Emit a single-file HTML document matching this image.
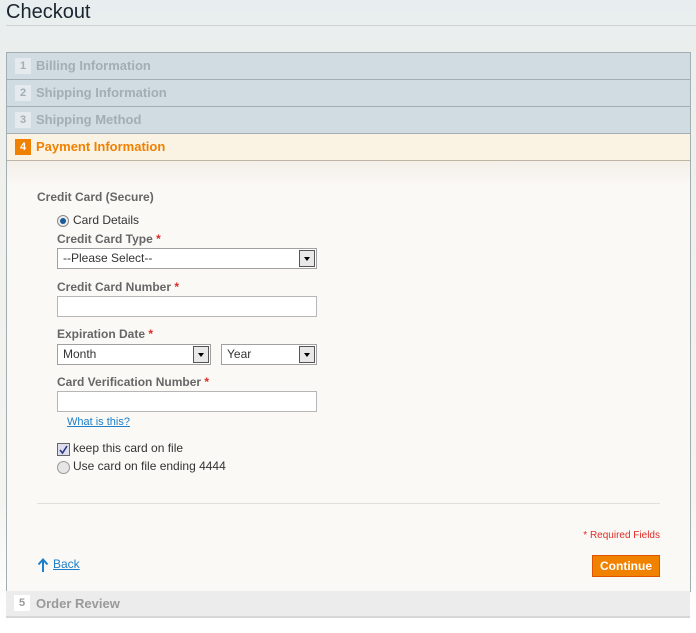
<!DOCTYPE html>
<html><head><style>
body{margin:0;width:696px;height:633px;background:linear-gradient(#e8eeef,#eef0ec 120px,#f4f4f1 500px,#fff 620px);font-family:"Liberation Sans",Arial,sans-serif;position:relative;overflow:hidden}
h1{position:absolute;left:6px;top:0;margin:0;font-weight:normal;font-size:20px;color:#1a2530;line-height:25px}
.hr{position:absolute;left:6px;right:0;top:25px;border-top:1px solid #cfd3d4}
.panel{position:absolute;left:6px;top:52px;width:683px;border:1px solid #a3aeb3;border-bottom:none}
.st{height:26px;background:#d0dbe2;border-bottom:1px solid #a3aeb3;font-weight:bold;font-size:13px;color:#a2adb4;line-height:25px;position:relative}
.num{position:absolute;left:8px;top:5px;width:16px;height:16px;background:#e4eaee;color:#a2adb4;font-size:11px;font-weight:bold;text-align:center;line-height:16px}
.st span.t{position:absolute;left:29px}
.act{background:#faf3e4;color:#f08000;border-bottom:1px solid #bfb4a4}
.act .num{background:#f08000;color:#fff}
.cont{height:430px;background:linear-gradient(#f4efe8,#faf9f6 25px);position:relative;border-bottom:1px solid #bfb4a4}
.lbl{position:absolute;font-size:12px;font-weight:bold;color:#666;}
.req{color:#e02b27}
.txt{position:absolute;font-size:12px;color:#333}
.inp{position:absolute;background:#fff;border:1px solid #b6b6b6;box-sizing:border-box}
.sel{position:absolute;background:#fff;border:1px solid #a0a0a0;height:21px;box-sizing:border-box;font-size:12px;color:#333;line-height:19px;padding-left:5px}
.arr{position:absolute;right:1px;top:1px;width:16px;height:17px;box-sizing:border-box;border:1px solid #555;background:#e8e8e8}
.arr:after{content:"";position:absolute;left:4px;top:6px;border-left:3px solid transparent;border-right:3px solid transparent;border-top:4px solid #000}
a{color:#1e7ec8}
.ord{position:absolute;left:6px;top:591px;width:684px;height:25px;background:#ececec;border-bottom:2px solid #d6d6d6;font-weight:bold;font-size:13px;color:#999;line-height:25px}
.ord .num{background:#fff;color:#999;left:8px;top:4px}
</style></head><body>
<h1>Checkout</h1><div class="hr"></div>
<div class="panel">
<div class="st"><span class="num">1</span><span class="t">Billing Information</span></div>
<div class="st"><span class="num">2</span><span class="t">Shipping Information</span></div>
<div class="st"><span class="num">3</span><span class="t">Shipping Method</span></div>
<div class="st act"><span class="num">4</span><span class="t">Payment Information</span></div>
<div class="cont">
<div class="lbl" style="left:30px;top:29px">Credit Card (Secure)</div>
<svg style="position:absolute;left:50px;top:54px" width="12" height="12"><circle cx="6" cy="6" r="5.5" fill="#eee" stroke="#888"/><circle cx="6" cy="6" r="3" fill="#1a5a9a"/></svg>
<div class="txt" style="left:66px;top:52px">Card Details</div>
<div class="lbl" style="left:50px;top:71px">Credit Card Type <span class="req">*</span></div>
<div class="sel" style="left:50px;top:87px;width:260px">--Please Select--<div class="arr"></div></div>
<div class="lbl" style="left:50px;top:119px">Credit Card Number <span class="req">*</span></div>
<div class="inp" style="left:50px;top:135px;width:260px;height:21px"></div>
<div class="lbl" style="left:50px;top:166px">Expiration Date <span class="req">*</span></div>
<div class="sel" style="left:50px;top:183px;width:154px">Month<div class="arr"></div></div>
<div class="sel" style="left:214px;top:183px;width:96px">Year<div class="arr"></div></div>
<div class="lbl" style="left:50px;top:214px">Card Verification Number <span class="req">*</span></div>
<div class="inp" style="left:50px;top:230px;width:260px;height:21px"></div>
<a class="txt" style="left:60px;top:255px;font-size:11px;color:#1e7ec8" href="#">What is this?</a>
<svg style="position:absolute;left:50px;top:282px" width="13" height="13"><rect x=".5" y=".5" width="12" height="12" fill="#dde" stroke="#666"/><path d="M3 7l2.5 3L10 3" stroke="#2a3a80" stroke-width="1.6" fill="none"/></svg>
<div class="txt" style="left:66px;top:280px">keep this card on file</div>
<svg style="position:absolute;left:50px;top:300px" width="13" height="13"><circle cx="6.5" cy="6.5" r="6" fill="#e6e6e6" stroke="#999"/></svg>
<div class="txt" style="left:66px;top:298px">Use card on file ending 4444</div>
<div style="position:absolute;left:30px;right:30px;top:342px;border-top:1px solid #e2e0db"></div>
<div class="txt" style="right:30px;top:369px;font-size:10px;color:#e02b27">* Required Fields</div>
<svg style="position:absolute;left:30px;top:397px" width="12" height="14"><path d="M6 14V2M1.5 6.5L6 1.5l4.5 5" stroke="#1e7ec8" stroke-width="2" fill="none"/></svg>
<a class="txt" style="left:46px;top:396px;color:#1e7ec8" href="#">Back</a>
<div style="position:absolute;right:30px;top:394px;width:66px;height:20px;background:#f18200;border:1px solid #de5400;color:#fff;font-weight:bold;font-size:12px;text-align:center;line-height:20px">Continue</div>
</div>
</div>
<div class="ord"><span class="num">5</span><span style="position:absolute;left:30px">Order Review</span></div>
</body></html>
